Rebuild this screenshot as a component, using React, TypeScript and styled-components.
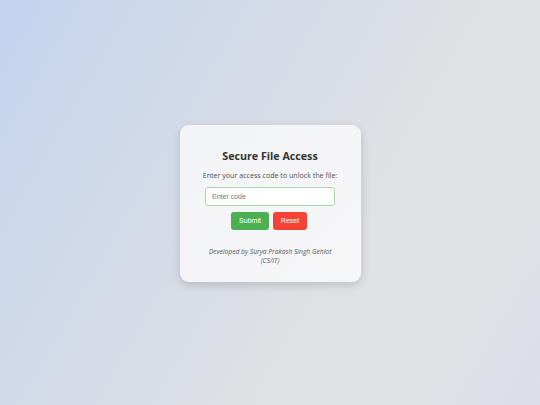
import React from "react";
import styled, { createGlobalStyle } from "styled-components";

const GlobalStyle = createGlobalStyle`
  html, body { margin: 0; padding: 0; }
  body { width: 540px; height: 405px; overflow: hidden; }
  * { box-sizing: border-box; }
`;

const Page = styled.div`
  width: 540px;
  height: 405px;
  display: flex;
  align-items: center;
  justify-content: center;
  background: linear-gradient(120deg, #c4d4ef 0%, #d3dbe8 35%, #e0e1e3 65%, #e1e2e5 82%, #dcdee9 100%);
  font-family: "Open Sans", "DejaVu Sans", sans-serif;
`;

const Card = styled.div`
  width: 181px;
  height: 157px;
  margin-top: 1px;
  border-radius: 9px;
  background: linear-gradient(135deg, #f3f4f7 0%, #f6f6f7 100%);
  box-shadow: 0 3px 10px rgba(0, 0, 0, 0.16);
  display: flex;
  flex-direction: column;
  align-items: center;
  padding-top: 24px;
`;

const Title = styled.h2`
  margin: 0;
  font-size: 10.7px;
  line-height: 14px;
  font-weight: 700;
  color: #333;
`;

const Subtitle = styled.p`
  margin: 7px 0 0;
  font-size: 7.1px;
  line-height: 10px;
  font-weight: 500;
  color: #4d4d4d;
`;

const CodeInput = styled.input`
  margin-top: 7px;
  width: 130px;
  height: 19px;
  border: 1px solid #a9d8ab;
  border-radius: 3px;
  background: #fff;
  padding: 0 6px;
  font-family: "Liberation Sans", Arial, sans-serif;
  font-size: 7px;
  color: #333;
  outline: none;
  &::placeholder { color: #777; }
`;

const Buttons = styled.div`
  display: flex;
  gap: 4px;
  margin-top: 6px;
  margin-right: 2px;
`;

const Btn = styled.button<{ $tone: "green" | "red" }>`
  height: 18px;
  width: ${(p) => (p.$tone === "green" ? 38 : 34)}px;
  border: none;
  border-radius: 3px;
  background: ${(p) => (p.$tone === "green" ? "#4caf50" : "#f44336")};
  color: #fff;
  font-family: "Liberation Sans", Arial, sans-serif;
  font-size: 7px;
  padding: 0;
`;

const Footer = styled.p`
  margin: 17px 0 0;
  text-align: center;
  font-size: 6.7px;
  line-height: 9px;
  font-weight: 500;
  font-style: italic;
  color: #555;
  width: 150px;
`;

export default function App() {
  return (
    <>
      <GlobalStyle />
      <Page>
        <Card>
          <Title>Secure File Access</Title>
          <Subtitle>Enter your access code to unlock the file:</Subtitle>
          <CodeInput placeholder="Enter code" />
          <Buttons>
            <Btn $tone="green">Submit</Btn>
            <Btn $tone="red">Reset</Btn>
          </Buttons>
          <Footer>
            Developed by Surya Prakash Singh Gehlot
            <br />
            (CS/IT)
          </Footer>
        </Card>
      </Page>
    </>
  );
}
